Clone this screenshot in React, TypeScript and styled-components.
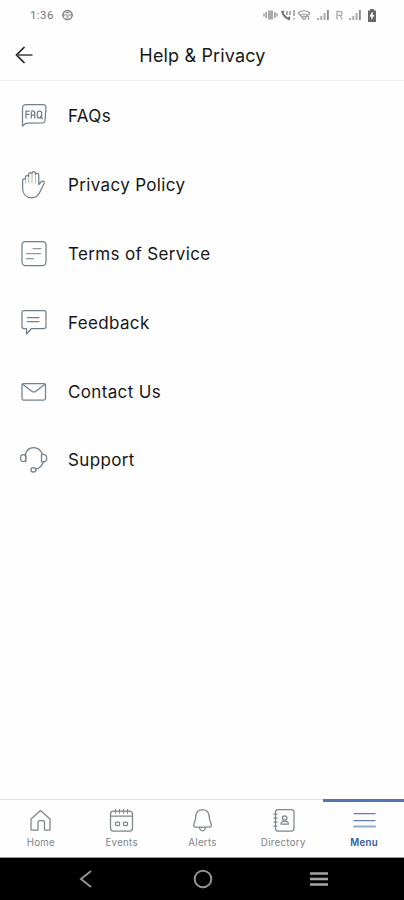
import React from 'react';
import styled, { createGlobalStyle } from 'styled-components';

const GlobalStyle = createGlobalStyle`
  * { box-sizing: border-box; }
  body { margin: 0; background: #fefefe; font-family: Inter, "Liberation Sans", sans-serif; }
`;

const Screen = styled.div`
  width: 404px;
  height: 900px;
  display: flex;
  flex-direction: column;
  background: #fefefe;
  overflow: hidden;
`;

const StatusBar = styled.div`
  height: 30px;
  flex: none;
  display: flex;
  align-items: center;
  justify-content: space-between;
  padding: 0 27px 0 30px;
  color: #777;
`;

const StatusGroup = styled.div<{ $gap: number }>`
  display: flex;
  align-items: center;
  gap: ${(p) => p.$gap}px;
`;

const Clock = styled.span`
  font: 400 11.5px/14px Roboto, sans-serif;
  letter-spacing: 0.4px;
  width: 26px;
  white-space: nowrap;
`;

const Header = styled.header`
  height: 51px;
  flex: none;
  display: grid;
  grid-template-columns: 48px 1fr 48px;
  align-items: center;
  border-bottom: 1px solid #f0f0f0;
`;

const BackButton = styled.button`
  display: flex;
  border: 0;
  background: none;
  padding: 0 0 0 14px;
`;

const Title = styled.h1`
  margin: 0;
  padding: 2px 0 0 1px;
  text-align: center;
  font-size: 18px;
  font-weight: 400;
  line-height: 24px;
  letter-spacing: 0.16px;
  color: #181818;
`;

const List = styled.main`
  flex: 1;
  padding-top: 1px;
`;

const Row = styled.div`
  height: 68.8px;
  display: flex;
  align-items: center;
  gap: 18px;
  padding-left: 18px;
`;

const RowLabel = styled.span`
  font-size: 17px;
  line-height: 24px;
  letter-spacing: 0.35px;
  color: #161616;
`;

const LineIcon = styled.svg<{ $color?: string }>`
  display: block;
  flex: none;
  fill: none;
  stroke: ${(p) => p.$color ?? '#71808c'};
  stroke-width: 1.25;
  stroke-linecap: round;
  stroke-linejoin: round;
`;

const TabBar = styled.nav`
  height: 59px;
  flex: none;
  display: grid;
  grid-template-columns: repeat(5, 1fr);
  border-bottom: 1px solid #999;
`;

const Tab = styled.div<{ $active?: boolean }>`
  display: flex;
  flex-direction: column;
  align-items: center;
  border-top: ${(p) => (p.$active ? '3px solid #5273b4' : '1px solid #e0e3e5')};
  padding: ${(p) => (p.$active ? '3px' : '5px')} 0 0 1px;
`;

const TabLabel = styled.span<{ $active?: boolean }>`
  margin-top: 2px;
  font-size: 9.7px;
  line-height: 12px;
  letter-spacing: 0.3px;
  font-weight: ${(p) => (p.$active ? 600 : 400)};
  color: ${(p) => (p.$active ? '#35599f' : '#7d8588')};
`;

const SystemBar = styled.div`
  height: 42px;
  flex: none;
  display: flex;
  align-items: center;
  justify-content: space-between;
  padding: 0 73px 0 74px;
  background: #000;
`;

const Signal = () => (
  <svg width="13" height="12" viewBox="0 0 13 12" fill="#888">
    <path d="M0 9h2v2H0zM3.3 7h2v4h-2zM6.6 4h2v7h-2z" opacity=".7" />
    <path d="M10 1h1.8v10H10z" />
  </svg>
);

const items = [
  {
    label: 'FAQs',
    icon: (
      <>
        <path d="M4.500 26.200V8a3.500 3.500 0 0 1 3.500-3.500h17A3 3 0 0 1 28 7.500l-1 13a3 3 0 0 1-3 2.500H9.500Q7 23 4.500 26.200Z" />
        <path d="M8 18v-7h3.300M8 14.400h3M13.300 18v-5.500a1.700 1.700 0 0 1 3.400 0V18M13.300 15h3.400M19.300 13q0-2 2.200-2t2.200 2v3q0 2-2.200 2t-2.200-2zM22.500 16.500l1.700 2.200" />
      </>
    ),
  },
  {
    label: 'Privacy Policy',
    icon: (
      <>
        <path d="M7.500 10V8.200a1.700 1.700 0 0 1 3.200-.8V5.200a1.700 1.700 0 0 1 3.300-.5V4a1.800 1.800 0 0 1 3.500 0v1.400a1.700 1.700 0 0 1 3.300.6v9.500l2.200-2.500c1.700-1.700 4-.5 3.200 1.300l-4.600 9.200c-1.700 3.900-4 5.300-8 5.300-5.600 0-9-3.800-9-9.500V12c0-1.800 1.200-2.500 2.900-2" />
        <path d="M7.500 10v4M10.700 7.500V14M14 5v9M17.500 5v9" opacity=".45" />
      </>
    ),
  },
  {
    label: 'Terms of Service',
    icon: (
      <>
        <rect x="4" y="3.500" width="24" height="24" rx="3.500" />
        <path d="M15 10.500h8M8.500 15.500h14M8.500 20.500h7" opacity=".8" />
      </>
    ),
  },
  {
    label: 'Feedback',
    icon: (
      <>
        <path d="M6 3.500h20a2 2 0 0 1 2 2v14a2 2 0 0 1-2 2H13.500L8.500 27v-5.500H6a2 2 0 0 1-2-2v-14a2 2 0 0 1 2-2Z" />
        <path d="M9.500 10.500H21M9.500 14.500H21" />
      </>
    ),
  },
  {
    label: 'Contact Us',
    icon: (
      <>
        <rect x="4" y="7.500" width="23.500" height="16.500" rx="1.500" />
        <path d="m5 8.500 8.800 6.700q2 1.500 4 0l8.800-6.700" />
      </>
    ),
  },
  {
    label: 'Support',
    icon: (
      <>
        <path d="M7.200 10.500C8.500 6 11.500 3.500 15.500 3.500S23 6 24.500 10.500M25.500 17.500q-1.700 6-8 8" />
        <ellipse cx="5.200" cy="14" rx="2.700" ry="3.500" />
        <path d="M7.700 10v8M23.500 10.300h1.500c5 .5 5 7.200 0 7.500h-1.500z" />
        <ellipse cx="15.400" cy="25.800" rx="2.500" ry="2.300" />
      </>
    ),
  },
];

const tabs = [
  {
    label: 'Home',
    icon: <path d="M5 25V14l9.500-8.500L24 14v11h-5.500v-8q0-1.500-1.500-1.500h-3.500q-1.500 0-1.500 1.500v8Z" />,
  },
  {
    label: 'Events',
    icon: (
      <>
        <rect x="3.500" y="6" width="22" height="20" rx="3" />
        <path d="M3.500 11h22M8.500 4.500V8M12.500 4.500V8M16.500 4.500V8M20.500 4.500V8" />
        <rect x="8.500" y="17" width="4" height="3.500" rx="1" />
        <rect x="16.500" y="17" width="4" height="3.500" rx="1" />
      </>
    ),
  },
  {
    label: 'Alerts',
    icon: (
      <path d="M7.500 14C7.500 8 9.500 4.500 14.500 4.500S21.500 8 21.500 14l1.700 5.500q.8 2.500-1.700 2.500h-14Q5 22 5.800 19.500ZM11.500 22.500q.5 3.300 3 3.300t3-3.300" />
    ),
  },
  {
    label: 'Directory',
    icon: (
      <>
        <rect x="6.500" y="4.500" width="18.500" height="21.500" rx="2.500" />
        <path d="M5 9h3M5 13h3M5 17h3M5 21h3M12 19q0-3 3.700-3t3.700 3z" />
        <circle cx="15.700" cy="13" r="2.200" />
      </>
    ),
  },
  {
    label: 'Menu',
    active: true,
    icon: (
      <>
        <path d="M4 8.500h21M4 15.500h21" />
        <path d="M4 21.500h21" strokeWidth="2" opacity=".65" />
      </>
    ),
  },
];

export default function App() {
  return (
    <Screen>
      <GlobalStyle />
      <StatusBar>
        <StatusGroup $gap={5}>
          <Clock>1:36</Clock>
          <svg width="13" height="12" viewBox="0 0 13 12" fill="none" stroke="#858585" strokeWidth="1.500">
            <circle cx="6.500" cy="6" r="4.600" />
            <path d="M1 6h11M4.500 4q2-1.500 4 0M5 8h3" strokeWidth="1.200" />
          </svg>
        </StatusGroup>
        <StatusGroup $gap={5}>
          <svg width="49" height="12" viewBox="0 0 49 12" fill="none" stroke="#999" strokeWidth="1.500">
            <path d="M1 4.500v3M3.200 3v6M11.800 3v6M14 4.500v3" />
            <path d="M7.500 1.500v9" stroke="#aaa" strokeWidth="5" />
            <path d="M19 2q1 6 8 8.500M19 3.500l2-1.500M25 10l2-2" stroke="#777" strokeWidth="2" />
            <path d="M24 2v4M27 2v4M31 1v6M31 9v1.500" />
            <path d="M35 4q6-4.500 12 0M37 6.500q4-3 8 0M39 8.500l2-1.500 2 1.500-2 2zM45.500 7v4M35 4l5 5M47 4l-4 4" strokeWidth="1.200" />
          </svg>
          <Signal />
          <svg width="9" height="12" viewBox="0 0 9 12" fill="none" stroke="#aaa" strokeWidth="1.300">
            <path d="M2 10.500V2.500h3q2 0 2 2t-2 2H2M5 6.500l2.500 4" />
          </svg>
          <Signal />
          <svg width="10" height="13" viewBox="0 0 10 13" fill="#666">
            <path fillRule="evenodd" d="M3 0h4v1.500h2V13H1V1.500h2zM5 3 2.600 7.500h1.700V11L7.500 6H5.700V3z" />
          </svg>
        </StatusGroup>
      </StatusBar>
      <Header>
        <BackButton aria-label="Back">
          <svg width="20" height="20" viewBox="0 0 20 20" fill="none" stroke="#202020" strokeWidth="1.700">
            <path d="M10.500 2 2.500 10l8 8" />
            <path d="M3 10h15.500" stroke="#555" />
          </svg>
        </BackButton>
        <Title>Help &amp; Privacy</Title>
      </Header>
      <List>
        {items.map((item) => (
          <Row key={item.label}>
            <LineIcon width="32" height="32" viewBox="0 0 32 32">{item.icon}</LineIcon>
            <RowLabel>{item.label}</RowLabel>
          </Row>
        ))}
      </List>
      <TabBar>
        {tabs.map((tab) => (
          <Tab key={tab.label} $active={tab.active}>
            <LineIcon width="29" height="30" viewBox="0 0 29 30" $color={tab.active ? '#607eae' : '#7d878a'}>
              {tab.icon}
            </LineIcon>
            <TabLabel $active={tab.active}>{tab.label}</TabLabel>
          </Tab>
        ))}
      </TabBar>
      <SystemBar>
        <svg width="24" height="24" viewBox="0 0 24 24" fill="none" stroke="#929292" strokeWidth="2">
          <path d="M17 4 7 12l10 8" />
        </svg>
        <svg width="24" height="24" viewBox="0 0 24 24" fill="none" stroke="#929292" strokeWidth="2">
          <circle cx="12" cy="12" r="8.300" />
        </svg>
        <svg width="24" height="24" viewBox="0 0 24 24" stroke="#a5a5a5" strokeWidth="2.300">
          <path d="M3 6.500h18M3 12h18M3 17.500h18" />
        </svg>
      </SystemBar>
    </Screen>
  );
}
